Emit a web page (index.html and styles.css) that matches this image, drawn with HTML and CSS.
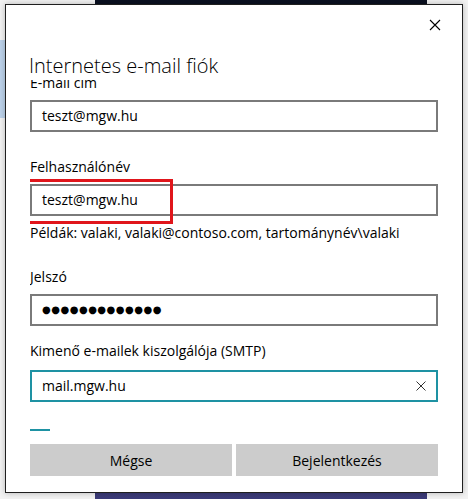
FILE: index.html
```html
<!DOCTYPE html>
<html lang="hu">
<head>
  <meta charset="UTF-8">
  <title>Internetes e-mail fiók</title>
  <link rel="stylesheet" href="styles.css">
</head>
<body>
  <div class="desktop">
    <div class="wallpaper"></div>
    <div class="side-tab"></div>

    <div class="dialog">
      <button class="close" aria-label="Bezárás">
        <svg width="12" height="12" viewBox="0 0 12 12"><path d="M1 1L11 11M11 1L1 11" stroke="#000" stroke-width="1.1" fill="none"/></svg>
      </button>

      <h1 class="title">Internetes e-mail fiók</h1>

      <div class="scroll">
        <div class="form">
          <div class="field">
            <label>E-mail cím</label>
            <div class="input">teszt@mgw.hu</div>
          </div>

          <div class="field field-user">
            <label>Felhasználónév</label>
            <div class="input">teszt@mgw.hu</div>
            <div class="mark"></div>
            <p class="hint">Példák: valaki, valaki@contoso.com, tartománynév\valaki</p>
          </div>

          <div class="field field-pass">
            <label>Jelszó</label>
            <div class="input dots">●●●●●●●●●●●●●</div>
          </div>

          <div class="field field-smtp">
            <label>Kimenő e-mailek kiszolgálója (SMTP)</label>
            <div class="input focused">
              <span>mail.mgw.hu</span>
              <svg width="10" height="10" viewBox="0 0 10 10"><path d="M0.5 0.5L9.5 9.5M9.5 0.5L0.5 9.5" stroke="#333" stroke-width="1" fill="none"/></svg>
            </div>
          </div>
        </div>
      </div>

      <div class="progress"></div>

      <div class="actions">
        <button>Mégse</button>
        <button>Bejelentkezés</button>
      </div>
    </div>
  </div>
</body>
</html>
```

FILE: styles.css
```css
* {
  box-sizing: border-box;
  font-family: 'Open Sans', 'Noto Sans', sans-serif;
}

body {
  margin: 0;
  background-color: #f0f0f0;
}

.desktop {
  position: relative;
  width: 468px;
  height: 499px;
  overflow: hidden;
  background-color: #f2f2f2;
}

.wallpaper {
  position: absolute;
  left: 95px;
  top: 0;
  width: 332px;
  height: 499px;
  background: linear-gradient(#0a1020, #1c2340 60%, #3b3a78);
}

.side-tab {
  position: absolute;
  left: 0;
  top: 40px;
  width: 6px;
  height: 78px;
  background-color: #bcd2ea;
}

.dialog {
  position: absolute;
  left: 5px;
  top: 4px;
  width: 458px;
  height: 489px;
  background-color: #fff;
  border: 1px solid #1f1f1f;
  box-shadow: 0 0 6px rgba(0, 0, 0, 0.25);
  display: flex;
  flex-direction: column;
  padding: 0 24px;
}

.close {
  position: absolute;
  right: 17px;
  top: 10px;
  width: 20px;
  height: 20px;
  padding: 0;
  border: none;
  background: none;
  display: flex;
  align-items: center;
  justify-content: center;
}

.title {
  margin: 47px 0 0 -1px;
  height: 28px;
  font-size: 20px;
  font-weight: 300;
  line-height: 28px;
  color: #000;
}

.scroll {
  height: 340px;
  overflow: hidden;
}

.form {
  margin-top: -7px;
}

.field {
  display: flex;
  flex-direction: column;
  position: relative;
}

.field label {
  font-size: 14px;
  line-height: 20px;
  color: #000;
  margin-bottom: 7px;
}

.input {
  height: 32px;
  border: 2px solid #7a7a7a;
  padding: 0 10px;
  font-size: 14px;
  line-height: 28px;
  color: #000;
  display: flex;
  align-items: center;
  justify-content: space-between;
}

.input.dots {
  font-size: 10px;
  letter-spacing: 0.5px;
  font-family: 'DejaVu Sans', sans-serif;
}

.input.focused {
  border-color: #1e92a3;
  padding-right: 10px;
}

.field-user {
  margin-top: 25px;
}

.mark {
  position: absolute;
  left: -5px;
  top: 22px;
  width: 148px;
  height: 45px;
  border: 3px solid #e0151b;
}

.hint {
  margin: 7px 0 0;
  font-size: 14px;
  line-height: 20px;
  color: #000;
}

.field-pass {
  margin-top: 24px;
}

.field-smtp {
  margin-top: 15px;
}

.field-smtp label {
  margin-bottom: 9px;
}

.progress {
  width: 20px;
  height: 2px;
  margin-top: 9px;
  background-color: #1e92a3;
}

.actions {
  display: flex;
  gap: 4px;
  margin-top: 13px;
}

.actions button {
  flex: 1;
  height: 32px;
  border: none;
  background-color: #cccccc;
  font-size: 14px;
  color: #000;
  padding: 0;
}
```
